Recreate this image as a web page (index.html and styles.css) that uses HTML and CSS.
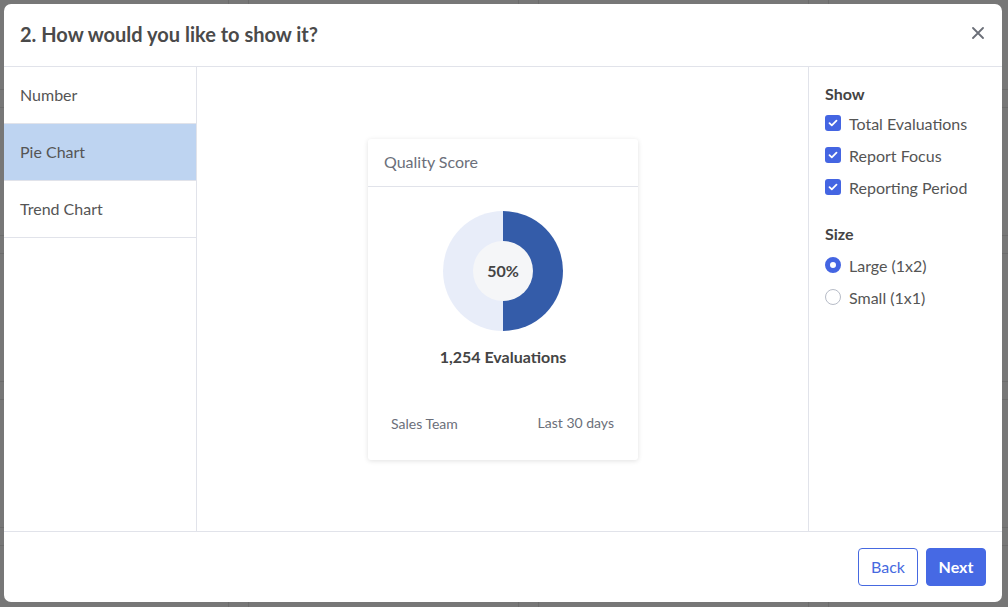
FILE: index.html
```html
<!DOCTYPE html>
<html>
<head>
<meta charset="utf-8">
<link rel="stylesheet" href="styles.css">
</head>
<body>
<div class="backdrop">
  <div class="modal">
    <header class="modal-header">
      <h1 class="modal-title">2. How would you like to show it?</h1>
      <button class="close" aria-label="Close">
        <svg width="12" height="12" viewBox="0 0 12 12"><path d="M1 1L11 11M11 1L1 11" stroke="#6b6f78" stroke-width="1.8" stroke-linecap="round"/></svg>
      </button>
    </header>
    <div class="modal-body">
      <nav class="types">
        <div class="type">Number</div>
        <div class="type active">Pie Chart</div>
        <div class="type">Trend Chart</div>
      </nav>
      <main class="preview">
        <div class="card">
          <div class="card-head">Quality Score</div>
          <div class="card-body">
            <div class="donut">
              <div class="donut-hole">50%</div>
            </div>
            <div class="count">1,254 Evaluations</div>
            <div class="card-foot">
              <span>Sales Team</span>
              <span>Last 30 days</span>
            </div>
          </div>
        </div>
      </main>
      <aside class="options">
        <div class="group-label">Show</div>
        <label class="opt"><span class="check"><svg width="10" height="8" viewBox="0 0 10 8"><path d="M1.5 4.2L3.8 6.3L8.5 1.7" fill="none" stroke="#fff" stroke-width="1.8" stroke-linecap="round" stroke-linejoin="round"/></svg></span>Total Evaluations</label>
        <label class="opt"><span class="check"><svg width="10" height="8" viewBox="0 0 10 8"><path d="M1.5 4.2L3.8 6.3L8.5 1.7" fill="none" stroke="#fff" stroke-width="1.8" stroke-linecap="round" stroke-linejoin="round"/></svg></span>Report Focus</label>
        <label class="opt"><span class="check"><svg width="10" height="8" viewBox="0 0 10 8"><path d="M1.5 4.2L3.8 6.3L8.5 1.7" fill="none" stroke="#fff" stroke-width="1.8" stroke-linecap="round" stroke-linejoin="round"/></svg></span>Reporting Period</label>
        <div class="group-label size-label">Size</div>
        <label class="opt"><span class="radio on"></span>Large (1x2)</label>
        <label class="opt"><span class="radio"></span>Small (1x1)</label>
      </aside>
    </div>
    <footer class="modal-footer">
      <button class="btn btn-outline">Back</button>
      <button class="btn btn-primary">Next</button>
    </footer>
  </div>
</div>
</body>
</html>
```

FILE: styles.css
```css
* { box-sizing: border-box; }
html, body { margin: 0; padding: 0; }
body {
  font-family: Lato, "Open Sans", sans-serif;
  width: 1008px;
  height: 607px;
  overflow: hidden;
  background-color: #777777;
  background-image:
    linear-gradient(90deg, transparent 228px, #6c6c6c 228px, #6c6c6c 229px, transparent 229px, transparent 248px, #6c6c6c 248px, #6c6c6c 249px, transparent 249px),
    linear-gradient(180deg, transparent 89px, #6c6c6c 89px, #6c6c6c 90px, transparent 90px, transparent 107px, #6c6c6c 107px, #6c6c6c 108px, transparent 108px);
  background-size: 290px 100%, 100% 146px;
}
.backdrop {
  padding: 4px 6px 5px 4px;
  height: 607px;
}
.modal {
  width: 998px;
  height: 598px;
  background: #fff;
  border-radius: 7px;
  display: flex;
  flex-direction: column;
  overflow: hidden;
}
.modal-header {
  height: 63px;
  flex: none;
  border-bottom: 1px solid #e1e3ea;
  display: flex;
  align-items: center;
  justify-content: space-between;
  padding: 0 18px 0 16px;
}
.modal-title {
  margin: 0;
  font-size: 20px;
  font-weight: 700;
  color: #4a4a4a;
  letter-spacing: 0;
  padding-bottom: 2px;
}
.close {
  border: 0;
  background: none;
  padding: 0;
  width: 12px;
  height: 12px;
  display: flex;
  margin-top: -4px;
}
.modal-body {
  flex: 1;
  display: flex;
  border-bottom: 1px solid #e1e3ea;
  min-height: 0;
}
.types {
  width: 193px;
  flex: none;
  border-right: 1px solid #e1e3ea;
}
.type {
  height: 57px;
  border-bottom: 1px solid #e1e3ea;
  display: flex;
  align-items: center;
  padding-left: 16px;
  font-size: 16px;
  color: #555;
  padding-bottom: 1px;
}
.type.active { background: #bed4f1; }
.preview {
  flex: 1;
  border-right: 1px solid #e1e3ea;
  display: flex;
  align-items: center;
  justify-content: center;
  padding-left: 1px;
}
.card {
  width: 270px;
  height: 321px;
  background: #fff;
  border-radius: 3px;
  box-shadow: 0 1px 5px rgba(0,0,0,0.12);
  display: flex;
  flex-direction: column;
}
.card-head {
  height: 48px;
  border-bottom: 1px solid #e1e3ea;
  display: flex;
  align-items: center;
  padding-left: 16px;
  padding-bottom: 2px;
  font-size: 16px;
  color: #6b6f7a;
  flex: none;
}
.card-body {
  flex: 1;
  display: flex;
  flex-direction: column;
  align-items: center;
  padding-top: 24px;
}
.donut {
  width: 120px;
  height: 120px;
  border-radius: 50%;
  background: conic-gradient(#345ca9 0 50%, #e8edf9 50% 100%);
  display: flex;
  align-items: center;
  justify-content: center;
}
.donut-hole {
  width: 60px;
  height: 60px;
  border-radius: 50%;
  background: #f5f6f8;
  display: flex;
  align-items: center;
  justify-content: center;
  font-size: 16px;
  font-weight: 700;
  color: #444;
}
.count {
  margin-top: 16px;
  font-size: 16px;
  font-weight: 700;
  color: #444;
}
.card-foot {
  align-self: stretch;
  display: flex;
  justify-content: space-between;
  align-items: flex-end;
  padding: 0 24px 0 23px;
  margin-top: 48px;
  font-size: 14px;
  color: #6b6f7a;
}
.card-foot span:first-child { margin-bottom: -1px; }
.options {
  width: 193px;
  flex: none;
  padding: 17px 0 0 16px;
}
.group-label {
  font-size: 16px;
  font-weight: 700;
  color: #444;
  height: 20px;
  line-height: 20px;
  margin-bottom: 3px;
}
.size-label { margin-top: 21px; margin-bottom: 5px; }
.opt {
  display: flex;
  align-items: center;
  height: 32px;
  font-size: 16px;
  color: #555;
}
.check {
  width: 16px;
  height: 16px;
  border-radius: 3px;
  background: #4465e2;
  display: inline-flex;
  align-items: center;
  justify-content: center;
  margin-right: 8px;
  flex: none;
}
.radio {
  width: 16px;
  height: 16px;
  border-radius: 50%;
  border: 1px solid #b7bcc7;
  margin-right: 8px;
  flex: none;
  background: #fff;
}
.radio.on {
  border: 5px solid #4465e2;
}
.modal-footer {
  height: 70px;
  flex: none;
  display: flex;
  align-items: center;
  justify-content: flex-end;
  gap: 8px;
  padding-right: 16px;
  padding-bottom: 1px;
}
.btn {
  font-family: Lato, "Open Sans", sans-serif;
  font-size: 16px;
  height: 38px;
  width: 60px;
  border-radius: 4px;
  padding: 0 0 1px;
  cursor: pointer;
}
.btn-outline {
  background: #fff;
  border: 1px solid #4669e0;
  color: #4669e0;
}
.btn-primary {
  background: #4669e4;
  border: 1px solid #4669e4;
  color: #fff;
  font-weight: 700;
}
```
